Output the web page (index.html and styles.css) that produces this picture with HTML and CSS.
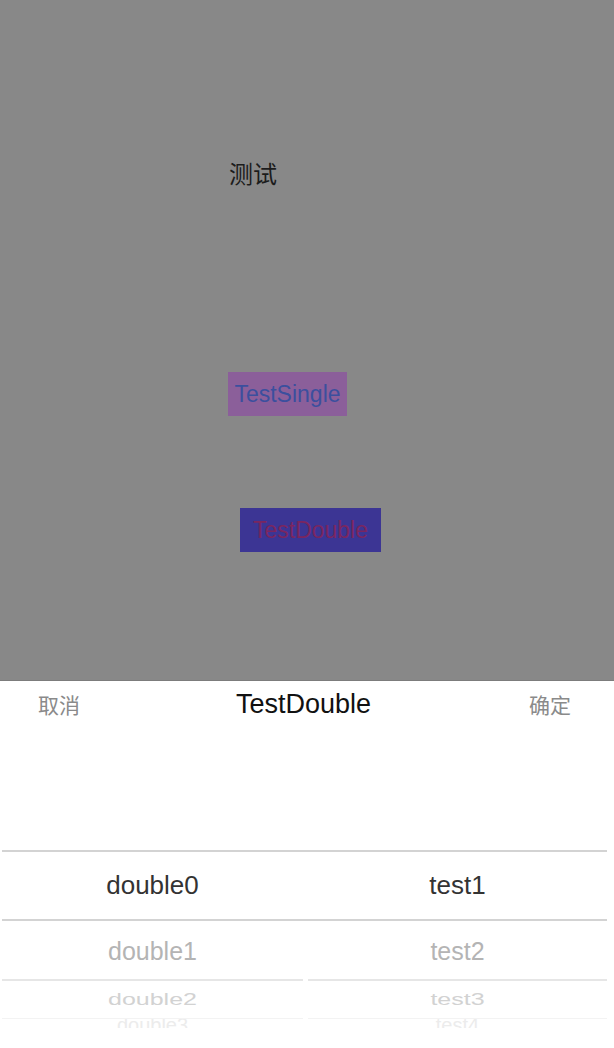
FILE: index.html
```html
<!DOCTYPE html>
<html lang="zh">
<head>
<meta charset="utf-8">
<link rel="stylesheet" href="styles.css">
</head>
<body>
<div class="screen">
  <div class="backdrop">
    <div class="label">测试</div>
    <div class="btn btn-single">TestSingle</div>
    <div class="btn btn-double">TestDouble</div>
  </div>
  <div class="sheet">
    <div class="sheet-head">
      <span class="cancel">取消</span>
      <span class="title">TestDouble</span>
      <span class="ok">确定</span>
    </div>
    <div class="picker">
      <div class="sel-row">
        <span>double0</span>
        <span>test1</span>
      </div>
      <div class="row row1">
        <span>double1</span>
        <span>test2</span>
      </div>
      <div class="row row2">
        <span><em>double2</em></span>
        <span><em>test3</em></span>
      </div>
      <div class="row row3">
        <span>double3</span>
        <span>test4</span>
      </div>
    </div>
  </div>
</div>
</body>
</html>
```

FILE: styles.css
```css
html, body {
  margin: 0;
  padding: 0;
}
body {
  font-family: "Liberation Sans", "Noto Sans CJK SC", sans-serif;
  background: #ffffff;
}
.screen {
  width: 614px;
  height: 1048px;
  overflow: hidden;
  display: flex;
  flex-direction: column;
}
.backdrop {
  height: 680px;
  background: #888888;
  display: flex;
  flex-direction: column;
  align-items: flex-start;
  border-bottom: 1px solid #7c7c7c;
}
.label {
  margin: 158px 0 0 229px;
  font-family: "Noto Sans CJK SC", sans-serif;
  font-size: 24px;
  line-height: 30px;
  color: #1c1c1c;
}
.btn {
  height: 44px;
  display: flex;
  align-items: center;
  justify-content: center;
  font-size: 23px;
}
.btn-single {
  margin: 184px 0 0 228px;
  width: 119px;
  background: #8b5f9a;
  color: #3b4f9e;
}
.btn-double {
  margin: 92px 0 0 240px;
  width: 141px;
  background: #3c3594;
  color: #7a2660;
}
.sheet {
  flex: 1;
  background: #ffffff;
  display: flex;
  flex-direction: column;
}
.sheet-head {
  height: 46px;
  display: grid;
  grid-template-columns: 1fr auto 1fr;
  align-items: center;
  padding: 0 43px 0 38px;
}
.cancel, .ok {
  font-family: "Noto Sans CJK SC", sans-serif;
  font-size: 21px;
  color: #8a8a8a;
}
.ok {
  justify-self: end;
}
.title {
  font-size: 27px;
  color: #111111;
  margin-left: -2px;
}
.picker {
  margin: 123px 7px 0 2px;
  display: flex;
  flex-direction: column;
}
.sel-row, .row {
  display: grid;
  grid-template-columns: 301px 299px;
  column-gap: 5px;
}
.sel-row {
  height: 67px;
  border-top: 2px solid #d3d3d3;
  border-bottom: 2px solid #d3d3d3;
  align-items: center;
}
.sel-row span, .row span {
  text-align: center;
}
.sel-row span {
  font-size: 26px;
  color: #333333;
}
.row span {
  display: flex;
  align-items: center;
  justify-content: center;
  box-sizing: border-box;
}
.row1 span {
  height: 60px;
  border-bottom: 2px solid #e6e6e6;
  font-size: 25px;
  color: #b4b4b4;
  padding-top: 2px;
}
.row2 span {
  height: 38px;
  border-bottom: 1px solid #f3f3f3;
  font-size: 25px;
  color: #d2d2d2;
}
.row2 em {
  font-style: normal;
  display: inline-block;
  transform: scaleY(0.66);
}
.row3 span {
  height: 9px;
  overflow: hidden;
  align-items: flex-start;
  padding-top: 2px;
  font-size: 20px;
  color: #ececec;
  line-height: 8px;
}
```
